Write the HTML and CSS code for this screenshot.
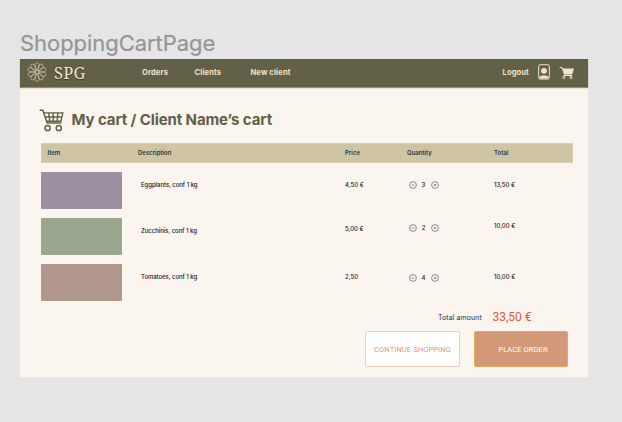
FILE: index.html
```html
<!DOCTYPE html>
<html lang="en">
<head>
<meta charset="utf-8">
<title>ShoppingCartPage</title>
<link rel="stylesheet" href="styles.css">
</head>
<body>
<svg width="0" height="0" class="defs">
  <defs>
    <g id="petal"><path d="M10 8.6C7.6 5.2 7.2 2.6 8.6 1.2Q10 .2 11.4 1.2C12.8 2.6 12.4 5.2 10 8.6Z"/></g>
    <symbol id="minus" viewBox="0 0 8 8"><circle cx="4" cy="4" r="3.4"/><path d="M2.7 4h2.6"/></symbol>
    <symbol id="plus" viewBox="0 0 8 8"><circle cx="4" cy="4" r="3.4"/><path d="M2.9 4h2.2M4 2.9v2.2"/></symbol>
  </defs>
</svg>
<h2 class="frame-name">ShoppingCartPage</h2>
<div class="frame">
  <header class="nav">
    <svg class="logo" viewBox="0 0 20 20">
      <use href="#petal"/><use href="#petal" transform="rotate(36 10 10)"/><use href="#petal" transform="rotate(72 10 10)"/><use href="#petal" transform="rotate(108 10 10)"/><use href="#petal" transform="rotate(144 10 10)"/><use href="#petal" transform="rotate(180 10 10)"/><use href="#petal" transform="rotate(216 10 10)"/><use href="#petal" transform="rotate(252 10 10)"/><use href="#petal" transform="rotate(288 10 10)"/><use href="#petal" transform="rotate(324 10 10)"/>
    </svg>
    <span class="brand">SPG</span>
    <a class="link orders">Orders</a>
    <a class="link clients">Clients</a>
    <a class="link new-client">New client</a>
    <a class="link logout">Logout</a>
    <svg class="user" viewBox="0 0 12 16"><rect x=".7" y=".7" width="10.6" height="14.4" rx="1.6" fill="none" stroke="#f3e2c9" stroke-width="1"/><circle cx="6" cy="6.8" r="2.9"/><path d="M1.2 14.6v-1.7Q3.2 11.2 6 11.2t4.8 1.7v1.7z"/></svg>
    <svg class="cart-small" viewBox="0 0 16 14"><path d="M.6 1.5H3l2.6 6.4-.6 1.6h8" fill="none" stroke="#f3e2c9"/><path d="M3 2.4h12L13.2 8.6H5.2z"/><circle cx="4.8" cy="11.4" r="1.1" fill="none" stroke="#f3e2c9"/><circle cx="12" cy="11.4" r="1.1" fill="none" stroke="#f3e2c9"/></svg>
  </header>
  <main>
    <div class="heading">
      <svg class="cart" viewBox="0 0 26 23"><path d="M.6 1.2h3.2l4.4 12.9h14.2" stroke-width="1.5"/><path d="M4.6 3.9h19.2l-1.9 8.4H7.6M6 8h16.8M9.7 4l1.1 8.3M14.2 4v8.3M18.9 4l-.8 8.3" stroke-width="1.4"/><circle cx="8.6" cy="19" r="2.6" stroke-width="1.5"/><circle cx="19.8" cy="19" r="2.6" stroke-width="1.5"/></svg>
      <h1>My cart / Client Name’s cart</h1>
    </div>
    <div class="grid head"><span>Item</span><span>Description</span><span>Price</span><span>Quantity</span><span>Total</span></div>
    <div class="grid row first">
      <div class="thumb eggplant"></div><span class="desc">Eggplants, conf 1 kg</span><span>4,50 €</span>
      <span class="qty"><svg><use href="#minus"/></svg><b>3</b><svg><use href="#plus"/></svg></span><span>13,50 €</span>
    </div>
    <div class="grid row second">
      <div class="thumb zucchini"></div><span class="desc">Zucchinis, conf 1 kg</span><span class="price">5,00 €</span>
      <span class="qty"><svg><use href="#minus"/></svg><b>2</b><svg><use href="#plus"/></svg></span><span class="sum">10,00 €</span>
    </div>
    <div class="grid row third">
      <div class="thumb tomato"></div><span class="desc">Tomatoes, conf 1 kg</span><span>2,50</span>
      <span class="qty"><svg><use href="#minus"/></svg><b>4</b><svg><use href="#plus"/></svg></span><span>10,00 €</span>
    </div>
    <div class="total"><span>Total amount</span><strong>33,50 €</strong></div>
    <div class="actions"><button class="continue">CONTINUE SHOPPING</button><button class="place">PLACE ORDER</button></div>
  </main>
</div>
</body>
</html>
```
FILE: styles.css
```css
* { box-sizing: border-box; }
body {
  margin: 0;
  height: 422px;
  padding: 29px 34px 0 20px;
  background: #e5e5e5;
  font-family: Inter, sans-serif;
  overflow: hidden;
}
.defs { display: block; }
.frame-name {
  margin: 0;
  height: 30px;
  font-size: 22px;
  line-height: 29px;
  font-weight: 400;
  color: #959595;
  letter-spacing: -.05px;
  -webkit-text-stroke: .2px #959595;
}
.frame { height: 318px; background: #faf5ee; }
.nav {
  display: flex;
  align-items: center;
  height: 28px;
  padding-left: 7px;
  background: #626047;
  box-shadow: 0 1px 1px #8f8d80;
  color: #f3e2c9;
}
.nav svg { flex: none; fill: #f3e2c9; }
.nav .logo {
  width: 20px;
  height: 20px;
  fill: none;
  stroke: #d6c8b0;
  stroke-width: .65;
  margin-top: -2px;
}
.brand {
  width: 87px;
  margin-left: 7px;
  font: 16.5px/28px "Noto Serif", "Liberation Serif", serif;
  letter-spacing: .3px;
  text-shadow: 0 1px 1px rgba(0, 0, 0, .45);
}
.link { font-size: 7.5px; line-height: 27px; height: 28px; font-weight: 700; white-space: nowrap; letter-spacing: .15px; }
.orders { width: 52.5px; margin-left: 1px; }
.clients { width: 56px; }
.new-client { width: 252px; }
.logout { width: 35px; }
.user { width: 12px; height: 16px; margin-top: -2px; }
.cart-small { width: 16px; height: 14px; margin-left: 9.5px; }
main { padding: 21px 15px 0 21px; }
.heading { display: flex; height: 35px; margin-left: -2px; }
.cart { width: 26px; height: 23px; margin-top: 1px; fill: none; stroke: #626047; }
h1 {
  margin: 0 0 0 6.5px;
  font-size: 15px;
  line-height: 24px;
  font-weight: 700;
  letter-spacing: -.1px;
  color: #626047;
  white-space: nowrap;
}
.grid { display: grid; grid-template-columns: 97px 207px 62px 87px 1fr; }
.head {
  height: 20px;
  background: #cfc5a5;
  border: 1px solid #d7ceb3;
  font-size: 6px;
  line-height: 17px;
  font-weight: 600;
  color: #2b3747;
  margin-bottom: 9px;
}
.head span:first-child { padding-left: 5.5px; }
.head span:nth-child(n+2) { margin-left: -1px; }
.row { height: 46px; font-size: 6px; line-height: 8px; font-weight: 500; color: #202020; }
.row > span { padding-top: 9px; }
.row .desc { padding-left: 3px; letter-spacing: -.05px; }
.row .qty { display: flex; padding-left: 1.5px; }
.qty svg { width: 8px; height: 8px; fill: none; stroke: #444; stroke-width: .6; }
.qty b { width: 14px; text-align: center; font-weight: 500; }
.second .price { padding-top: 7px; }
.second .qty { padding-top: 6px; }
.second .sum { padding-top: 4px; }
.third .qty { padding-top: 10px; }
.thumb { width: 80.5px; height: 36.5px; border-radius: 1px; }
.eggplant { background: #9b8fa0; }
.zucchini { background: #9aa78e; }
.tomato { background: #b2978c; }
.total {
  display: flex;
  align-items: center;
  height: 14px;
  padding-left: 397px;
  font-size: 7px;
  letter-spacing: .08px;
  color: #273444;
}
.total span { width: 54.5px; }
.total strong { font: 400 12px/14px Roboto, sans-serif; letter-spacing: 0; color: #e25b34; }
.actions { display: flex; gap: 14px; padding: 7px 0 0 324px; }
.actions button {
  width: 95px;
  height: 36px;
  padding: 0;
  border-radius: 2px;
  font: 7.5px Roboto, sans-serif;
  letter-spacing: .1px;
  white-space: nowrap;
}
.actions .continue { background: #fff; border: 1px solid #efcdbb; color: #d39a7a; }
.actions .place { width: 94px; background: #d29877; border: 1px solid #e4aa57; color: #fff; padding-left: 4px; }
```
